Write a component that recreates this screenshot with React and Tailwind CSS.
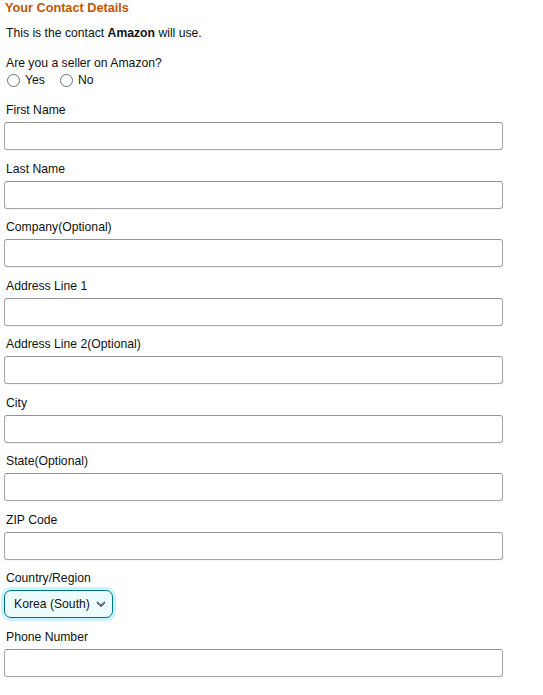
import React, { useState } from "react";

const fields = [
  "First Name",
  "Last Name",
  "Company(Optional)",
  "Address Line 1",
  "Address Line 2(Optional)",
  "City",
  "State(Optional)",
  "ZIP Code",
];

const Field = ({ label }) => (
  <div className="mb-[9.5px]">
    <label className="block pl-[2px] text-[12.2px] leading-[18px] mb-[3px] text-[#0f1111]">{label}</label>
    <input
      type="text"
      className="block w-[499px] h-[28px] rounded-[3px] border border-[#a6a6a6] border-t-[#949494] bg-white shadow-[0_1px_0_rgba(0,0,0,0.04)] outline-none"
    />
  </div>
);

const Radio = ({ label, checked, onClick }) => (
  <button type="button" onClick={onClick} className="flex items-center gap-[5px]">
    <span className="w-[13px] h-[13px] rounded-full border border-[#6f7373] bg-white flex items-center justify-center">
      {checked && <span className="w-[5px] h-[5px] rounded-full bg-[#0f1111]" />}
    </span>
    <span className="text-[12.2px] leading-[16px] text-[#0f1111]">{label}</span>
  </button>
);

const App = () => {
  const [seller, setSeller] = useState(null);

  return (
    <div className="min-h-screen bg-white px-[4px] pt-[1px] font-['Liberation_Sans',Arial,sans-serif]">
      <h2 className="pl-[1px] text-[12.7px] leading-[15px] font-bold text-[#c45500]">Your Contact Details</h2>
      <p className="mt-[9px] pl-[2px] text-[12.2px] leading-[16px] text-[#0f1111]">
        This is the contact <b>Amazon</b> will use.
      </p>
      <p className="mt-[14px] pl-[2px] text-[12.2px] leading-[16px] text-[#0f1111]">Are you a seller on Amazon?</p>
      <div className="mt-[1px] pl-[3px] flex items-center gap-[15px]">
        <Radio label="Yes" checked={seller === "yes"} onClick={() => setSeller("yes")} />
        <Radio label="No" checked={seller === "no"} onClick={() => setSeller("no")} />
      </div>

      <div className="mt-[13px]">
        {fields.map(f => <Field key={f} label={f} />)}

        <div className="mb-[9.5px]">
          <label className="block pl-[2px] text-[12.2px] leading-[18px] mb-[3px] text-[#0f1111]">Country/Region</label>
          <button
            type="button"
            className="flex items-center gap-[6px] h-[28px] pl-[9px] pr-[6px] rounded-[7px] border border-[#007185] bg-[#edfdff] shadow-[0_0_0_3px_#c8f3fa] text-[12.2px] text-[#0f1111]"
          >
            Korea (South)
            <svg width="10" height="7" viewBox="0 0 10 7" fill="none">
              <path d="M1.5 1.5L5 5L8.5 1.5" stroke="#666" strokeWidth="1.8" strokeLinecap="round" strokeLinejoin="round" />
            </svg>
          </button>
        </div>

        <Field label="Phone Number" />
      </div>
    </div>
  );
};

export default App;
